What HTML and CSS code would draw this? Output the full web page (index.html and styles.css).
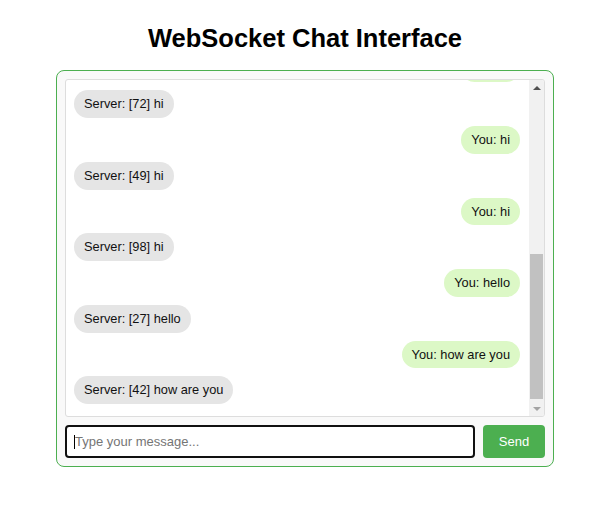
FILE: index.html
```html
<!DOCTYPE html>
<html lang="en">
<head>
<meta charset="utf-8">
<title>WebSocket Chat Interface</title>
<link rel="stylesheet" href="styles.css">
</head>
<body>
<div class="page">
  <h1 class="title">WebSocket Chat Interface</h1>
  <div class="chat">
    <div class="chat-box">
      <div class="messages">
        <div class="msg you">You: hi</div>
        <div class="msg server">Server: [72] hi</div>
        <div class="msg you">You: hi</div>
        <div class="msg server">Server: [49] hi</div>
        <div class="msg you">You: hi</div>
        <div class="msg server">Server: [98] hi</div>
        <div class="msg you">You: hello</div>
        <div class="msg server">Server: [27] hello</div>
        <div class="msg you">You: how are you</div>
        <div class="msg server">Server: [42] how are you</div>
      </div>
      <div class="scrollbar" aria-hidden="true">
        <div class="sb-btn"><span class="sb-arrow up"></span></div>
        <div class="sb-track"><div class="sb-thumb"></div></div>
        <div class="sb-btn"><span class="sb-arrow down"></span></div>
      </div>
    </div>
    <div class="composer">
      <div class="input-wrap">
        <input class="composer-input" type="text" placeholder="Type your message...">
        <span class="caret"></span>
      </div>
      <button class="send-btn" type="button">Send</button>
    </div>
  </div>
</div>
</body>
</html>
```

FILE: styles.css
```css
html, body {
  margin: 0;
  background: #ffffff;
}

body {
  font-family: "Liberation Sans", Arial, sans-serif;
  color: #000;
}

.page {
  padding: 23px 0 0 21px;
}

.title {
  margin: 0 0 17px;
  text-align: center;
  font-size: 25.5px;
  font-weight: bold;
  line-height: 30px;
}

.chat {
  width: 498px;
  box-sizing: border-box;
  margin: 0 auto;
  border: 1px solid #4caf50;
  border-radius: 8px;
  padding: 8px;
  background: #f9f9f9;
}

.chat-box {
  display: flex;
  height: 338px;
  box-sizing: border-box;
  border: 1px solid #dddddd;
  border-radius: 3px;
  background: #ffffff;
  overflow: hidden;
}

.messages {
  flex: 1;
  min-width: 0;
  overflow: hidden;
  padding: 10px 9px 12px 8px;
  display: flex;
  flex-direction: column;
  justify-content: flex-end;
  gap: 8px;
}

.msg {
  flex: none;
  align-self: flex-start;
  padding: 6px 10px;
  border-radius: 14px;
  font-size: 12.8px;
  line-height: 15.75px;
  color: #111;
  white-space: nowrap;
}

.msg.server {
  background: #e5e5e5;
}

.msg.you {
  align-self: flex-end;
  background: #dcf8c6;
}

.scrollbar {
  flex: none;
  width: 15px;
  background: #f1f1f1;
  display: flex;
  flex-direction: column;
}

.sb-btn {
  height: 15px;
  flex: none;
  display: flex;
  align-items: center;
  justify-content: center;
}

.sb-arrow {
  width: 0;
  height: 0;
  border-left: 4px solid transparent;
  border-right: 4px solid transparent;
}

.sb-arrow.up {
  border-bottom: 4px solid #505050;
}

.sb-arrow.down {
  border-top: 4px solid #a3a3a3;
}

.sb-track {
  flex: 1;
  display: flex;
  flex-direction: column;
  justify-content: flex-end;
  padding: 0 1px 2px;
}

.sb-thumb {
  height: 145px;
  background: #c1c1c1;
}

.composer {
  display: flex;
  gap: 8px;
  margin-top: 8px;
}

.input-wrap {
  position: relative;
  flex: 1;
  min-width: 0;
  display: flex;
}

.composer-input {
  flex: 1;
  min-width: 0;
  height: 33px;
  box-sizing: border-box;
  border: 2px solid #101010;
  border-radius: 4px;
  padding: 0 7px 0 8px;
  font-family: "Liberation Sans", Arial, sans-serif;
  font-size: 13px;
  color: #000;
  background: #fff;
  outline: none;
}

.composer-input::placeholder {
  color: #757575;
}

.caret {
  position: absolute;
  left: 9px;
  top: 10px;
  width: 1px;
  height: 14px;
  background: #000;
}

.send-btn {
  width: 62px;
  height: 33px;
  border: none;
  border-radius: 4px;
  background: #4caf50;
  color: #ffffff;
  font-family: "Liberation Sans", Arial, sans-serif;
  font-size: 13px;
  padding: 0;
  cursor: pointer;
}
```
